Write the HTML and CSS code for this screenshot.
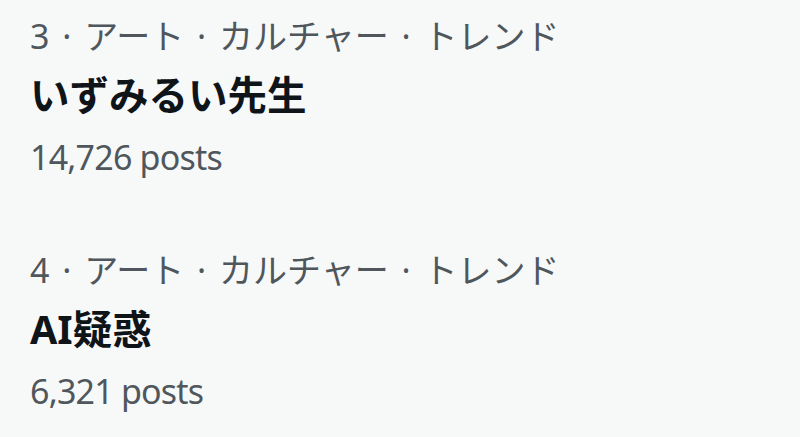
FILE: index.html
```html
<!DOCTYPE html>
<html lang="ja">
<head>
<meta charset="utf-8">
<link rel="stylesheet" href="styles.css">
</head>
<body>
<div class="trends">
  <div class="trend">
    <div class="meta">3 · アート · カルチャー · トレンド</div>
    <div class="title">いずみるい先生</div>
    <div class="count">14,726 posts</div>
  </div>
  <div class="trend">
    <div class="meta">4 · アート · カルチャー · トレンド</div>
    <div class="title">AI疑惑</div>
    <div class="count">6,321 posts</div>
  </div>
</div>
</body>
</html>
```
FILE: styles.css
```css
html, body {
  margin: 0;
  padding: 0;
  background: #f7f9f9;
}
body {
  font-family: "Noto Sans", "Noto Sans CJK JP", sans-serif;
  width: 800px;
  height: 437px;
  overflow: hidden;
}
.trends {
  display: flex;
  flex-direction: column;
  gap: 58px;
  padding: 10px 0 0 30px;
}
.trend {
  display: flex;
  flex-direction: column;
}
.meta {
  font-size: 34px;
  line-height: 52px;
  color: #50575c;
  word-spacing: 4px;
  white-space: nowrap;
}
.title {
  font-size: 39.5px;
  line-height: 66px;
  font-weight: 700;
  color: #0f1419;
  white-space: nowrap;
}
.count {
  font-size: 34px;
  line-height: 58px;
  color: #50575c;
  letter-spacing: -0.8px;
  white-space: nowrap;
}
```
